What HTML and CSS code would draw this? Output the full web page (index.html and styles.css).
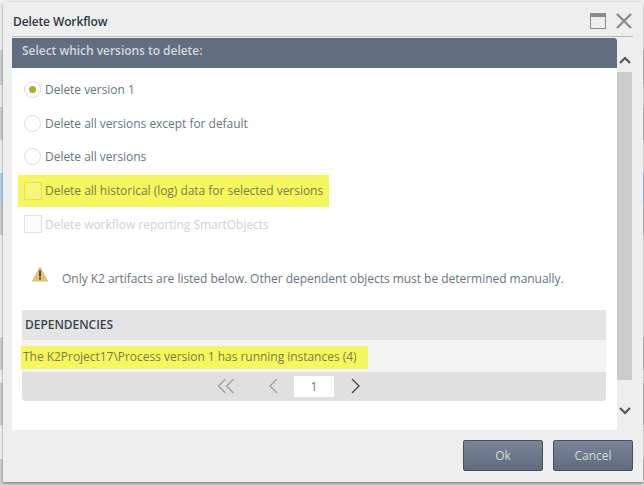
FILE: index.html
```html
<!DOCTYPE html>
<html lang="en">
<head>
  <meta charset="UTF-8">
  <title>Delete Workflow</title>
  <link rel="stylesheet" href="styles.css">
</head>
<body>

<div class="dialog">

  <div class="dialog-title">
    <span class="title-text">Delete Workflow</span>
    <svg class="title-icon" width="16" height="16" viewBox="0 0 16 16">
      <rect x="0.5" y="0.5" width="15" height="15" fill="none" stroke="#8c8c8c"/>
      <rect x="0" y="0" width="16" height="4" fill="#8c8c8c"/>
    </svg>
    <svg class="title-icon" width="16" height="16" viewBox="0 0 16 16">
      <path d="M1 1 L15 15 M15 1 L1 15" stroke="#8c8c8c" stroke-width="2.4" fill="none"/>
    </svg>
  </div>

  <div class="dialog-body">
    <div class="content">
      <div class="panel-header">Select which versions to delete:</div>
      <div class="options">
        <div class="option"><span class="radio checked"></span>Delete version 1</div>
        <div class="option"><span class="radio"></span>Delete all versions except for default</div>
        <div class="option"><span class="radio"></span>Delete all versions</div>
        <div class="option">
          <span class="marked">
            <span class="checkbox"></span>Delete all historical (log) data for selected versions
          </span>
        </div>
        <div class="option disabled"><span class="checkbox"></span>Delete workflow reporting SmartObjects</div>
      </div>
      <div class="warning">
        <svg width="16" height="16" viewBox="0 0 16 16">
          <path d="M8 1 L15.5 15 L0.5 15 Z" fill="#e8bd76" stroke="#e8bd76" stroke-linejoin="round"/>
          <rect x="7" y="4.5" width="2" height="6" fill="#4a4a4a"/>
          <rect x="7" y="11.5" width="2" height="2" fill="#4a4a4a"/>
        </svg>
        <span class="warning-text">Only K2 artifacts are listed below. Other dependent objects must be determined manually.</span>
      </div>
      <div class="grid">
        <div class="grid-head">DEPENDENCIES</div>
        <div class="grid-row"><span class="marked-row">The K2Project17\Process version 1 has running instances (4)</span></div>
        <div class="pager">
          <svg width="18" height="16" viewBox="0 0 18 16">
            <path d="M8.5 1 L1.5 8 L8.5 15 M16.5 1 L9.5 8 L16.5 15" fill="none" stroke="#9a9fa6" stroke-width="1.3"/>
          </svg>
          <svg class="prev" width="10" height="16" viewBox="0 0 10 16">
            <path d="M9 1 L2 8 L9 15" fill="none" stroke="#9a9fa6" stroke-width="1.3"/>
          </svg>
          <span class="page-box">1</span>
          <svg width="10" height="16" viewBox="0 0 10 16">
            <path d="M1 1 L8 8 L1 15" fill="none" stroke="#3f4650" stroke-width="1.3"/>
          </svg>
        </div>
      </div>
    </div>

    <div class="scrollbar">
      <svg width="12" height="8" viewBox="0 0 12 8">
        <path d="M1 7 L6 2 L11 7" fill="none" stroke="#555" stroke-width="2.2"/>
      </svg>
      <div class="thumb"></div>
      <svg width="12" height="8" viewBox="0 0 12 8">
        <path d="M1 1 L6 6 L11 1" fill="none" stroke="#555" stroke-width="2.2"/>
      </svg>
    </div>
  </div>

  <div class="dialog-footer">
    <button class="btn">Ok</button>
    <button class="btn">Cancel</button>
  </div>

</div>

</body>
</html>
```

FILE: styles.css
```css
html, body {
  height: 100%;
}

body {
  margin: 0;
  overflow: hidden;
  font-family: "Open Sans", Arial, sans-serif;
  font-size: 12px;
  letter-spacing: -0.03px;
  color: #6c7480;
  background: linear-gradient(to bottom,
    #f4f4f4 0, #f4f4f4 50px,
    #d2d2d2 50px, #d2d2d2 85px,
    #f0f0f0 85px, #f0f0f0 107px,
    #d2d2d2 107px, #d2d2d2 140px,
    #f4f4f4 140px, #f4f4f4 173px,
    #b5d6ea 173px, #b5d6ea 205px,
    #d2d2d2 205px, #d2d2d2 235px,
    #f4f4f4 235px, #f4f4f4 337px,
    #d2d2d2 337px, #d2d2d2 370px,
    #f4f4f4 370px, #f4f4f4 383px,
    #d2d2d2 383px, #d2d2d2 425px,
    #f4f4f4 425px, #f4f4f4 459px,
    #d2d2d2 459px, #d2d2d2 485px);
  padding: 2px 1px 3px 3px;
  box-sizing: border-box;
}

.dialog {
  width: 640px;
  height: 480px;
  background: #eeeeee;
  box-shadow: 0 1px 3px rgba(0, 0, 0, 0.45);
  display: flex;
  flex-direction: column;
  padding: 0 10px 0 9px;
  box-sizing: border-box;
}

.dialog-title {
  height: 35px;
  flex: none;
  display: flex;
  align-items: center;
  gap: 10px;
  padding: 4px 1px 0 1px;
  box-sizing: border-box;
  border-bottom: 1px solid #b4bccb;
}

.title-text {
  flex: 1;
  font-weight: 600;
  letter-spacing: -0.12px;
  color: #2f3742;
}

.dialog-body {
  margin-top: 1px;
  height: 392px;
  flex: none;
  display: flex;
}

.content {
  width: 605px;
  background: #fff;
}

.panel-header {
  height: 30px;
  line-height: 26px;
  padding-left: 10px;
  background: #626e80;
  color: #d3d7dd;
  font-weight: 600;
  border-top-right-radius: 3px;
}

.options {
  padding: 4.4px 0 0 12px;
}

.option {
  height: 33.75px;
  display: flex;
  align-items: center;
  gap: 4px;
}

.radio {
  width: 15px;
  height: 15px;
  border: 1px solid #dcdcdc;
  border-radius: 50%;
  background: #fff;
  display: flex;
  align-items: center;
  justify-content: center;
}

.radio.checked::after {
  content: "";
  width: 7px;
  height: 7px;
  border-radius: 50%;
  background: #b0ab2e;
}

.checkbox {
  width: 16px;
  height: 16px;
  border: 1px solid #dcdcdc;
  flex: none;
}

.marked {
  display: flex;
  align-items: center;
  gap: 3px;
  height: 32px;
  margin-left: -6px;
  padding: 0 6px;
  background: #f6f65f;
  color: #7a7e48;
}

.marked .checkbox {
  background: #f6f67a;
  border-color: #dede60;
}

.disabled {
  color: #cfd1d4;
  gap: 3px;
}

.disabled .checkbox {
  border-color: #e2e2e2;
  background: #fbfbfb;
}

.warning {
  display: flex;
  align-items: flex-start;
  gap: 14px;
  margin: 24.6px 0 0 20px;
  height: 20px;
}

.warning-text {
  line-height: 16px;
  margin-top: 5px;
}

.grid {
  margin: 24px 11px 0 10px;
}

.grid-head {
  height: 30px;
  line-height: 30px;
  padding-left: 3px;
  background: #e4e4e4;
  color: #3f444c;
  font-weight: 600;
}

.grid-row {
  height: 32px;
  background: #f4f4f4;
  padding-top: 6px;
  box-sizing: border-box;
}

.marked-row {
  display: block;
  width: 347px;
  height: 23px;
  line-height: 22px;
  margin-left: -1px;
  padding-left: 2px;
  box-sizing: border-box;
  background: #f6f65f;
  color: #7a7e48;
}

.pager {
  height: 29px;
  background: #e0e0e0;
  border-radius: 0 0 4px 4px;
  display: flex;
  align-items: center;
  padding-left: 195px;
}

.prev {
  margin-left: 33px;
}

.page-box {
  width: 40px;
  height: 21px;
  line-height: 21px;
  margin: 0 17px 0 16px;
  background: #fff;
  text-align: center;
}

.scrollbar {
  width: 15px;
  display: flex;
  flex-direction: column;
  align-items: center;
  box-sizing: border-box;
}

.scrollbar svg {
  margin-top: 18px;
}

.scrollbar svg:last-child {
  margin-top: 27px;
}

.thumb {
  width: 15px;
  height: 308px;
  background: #cacaca;
  margin-top: 8px;
}

.dialog-footer {
  flex: 1;
  display: flex;
  justify-content: flex-end;
  align-items: flex-start;
  gap: 10px;
  padding-top: 10px;
}

.btn {
  width: 80px;
  height: 31px;
  border: 1px solid #46505f;
  border-radius: 2px;
  background: linear-gradient(#7a8597, #5f6b7e);
  color: #d5d9df;
  font-family: inherit;
  font-size: 12px;
  padding: 0;
}
```
